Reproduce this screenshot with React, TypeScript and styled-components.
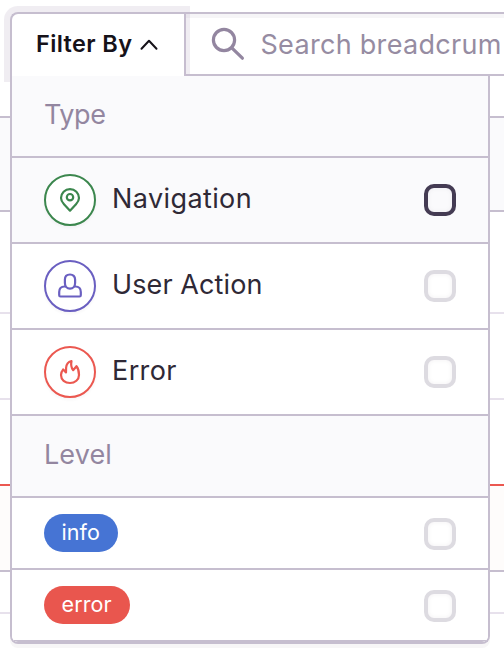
import React from "react";
import styled, { createGlobalStyle } from "styled-components";

const line = "#c6becf";

const GlobalStyle = createGlobalStyle`
  * { box-sizing: border-box; }
  body { margin: 0; background: #fff; overflow: hidden; font-family: Inter, "Liberation Sans", sans-serif; }
`;

const Page = styled.main`
  display: grid;
  width: 504px;
  height: 654px;
  overflow: hidden;
  background: #fff;
`;

const Table = styled.div`
  grid-area: 1 / 1;
  padding-top: 76px;
`;

const TableRow = styled.div<{ $h: number; $line: string; $bg?: string }>`
  height: ${(p) => p.$h}px;
  border-bottom: 2px solid ${(p) => p.$line};
  background: ${(p) => p.$bg ?? "#fff"};
`;

const Front = styled.div`
  grid-area: 1 / 1;
  z-index: 1;
  padding: 12px 0 0 10px;
  min-width: 0;
`;

const Toolbar = styled.div`
  display: flex;
  height: 64px;
`;

const FilterButton = styled.button`
  display: flex;
  flex: none;
  align-items: center;
  width: 174px;
  height: 64px;
  padding: 0 0 2px 24px;
  border: 2px solid ${line};
  border-width: 2px 0 0 2px;
  border-radius: 8px 0 0 0;
  background: #fff;
  background-clip: padding-box;
  box-shadow: 0 0 0 6px rgba(198, 190, 207, 0.27);
  color: #161219;
  font: 600 23.5px/28px Inter, sans-serif;
  letter-spacing: 0.38px;
  white-space: nowrap;
  z-index: 1;

  svg { flex: none; margin: 2px 0 0 8px; }
`;

const SearchBox = styled.div`
  display: flex;
  flex: none;
  align-items: center;
  width: 330px;
  height: 64px;
  padding-left: 25px;
  border: solid ${line};
  border-width: 2px 0 2px 2px;
  background: #fff;
  box-shadow: inset 0 4px 0 #f6f5f7;
  color: #9386a0;
  white-space: nowrap;
`;

const Placeholder = styled.span`
  margin-left: 15.5px;
  padding-top: 2px;
  color: #968ca2;
  font-size: 27px;
  line-height: 32px;
  letter-spacing: 0.3px;
`;

const Menu = styled.div`
  position: relative;
  z-index: 2;
  width: 480px;
  height: 568px;
  border: 2px solid ${line};
  border-top: 0;
  border-radius: 0 0 8px 8px;
  background: #fff;
  box-shadow: 0 4px 0 rgba(43, 34, 51, 0.04);
  overflow: hidden;
`;

const Heading = styled.div<{ $spacing: number }>`
  height: 82px;
  padding: 22px 0 0 32px;
  border-bottom: 2px solid ${line};
  background: #fafafc;
  color: #9386a0;
  font-size: 27px;
  line-height: 34px;
  letter-spacing: ${(p) => p.$spacing}px;
`;

const Option = styled.label<{ $compact?: boolean; $active?: boolean }>`
  display: flex;
  align-items: center;
  height: ${(p) => (p.$compact ? 72 : 86)}px;
  padding: 0 32px;
  border-bottom: 2px solid ${line};
  background: ${(p) => (p.$active ? "#fafafc" : "#fff")};
`;

const IconRing = styled.span<{ $color: string }>`
  display: grid;
  place-items: center;
  width: 52px;
  height: 52px;
  border: 2px solid ${(p) => p.$color};
  border-radius: 50%;
  background: #fff;
  color: ${(p) => p.$color};
  box-shadow: 0 2px 3px rgba(43, 34, 51, 0.04);
`;

const Name = styled.span<{ $spacing: number }>`
  margin-left: 16px;
  padding-bottom: 3px;
  color: #2f2936;
  font-size: 27px;
  line-height: 32px;
  letter-spacing: ${(p) => p.$spacing}px;
`;

const Tag = styled.span<{ $color: string; $w: number }>`
  width: ${(p) => p.$w}px;
  height: 38px;
  padding-left: 17.5px;
  border-radius: 19px;
  background: ${(p) => p.$color};
  color: #fff;
  font-size: 21.5px;
  line-height: 37px;
  letter-spacing: 0.1px;
`;

const Checkbox = styled.span<{ $active?: boolean; $compact?: boolean }>`
  width: 32px;
  height: 32px;
  margin-left: auto;
  margin-top: ${(p) => (p.$compact ? 2 : 0)}px;
  border: 4px solid ${(p) => (p.$active ? "#443b53" : "#dddbe1")};
  border-radius: 10px;
  background: transparent;
  box-shadow: inset 0 0 5px rgba(43, 34, 51, 0.06);
`;

const Icon = styled.svg.attrs({
  viewBox: "0 0 28 28",
  fill: "none",
  stroke: "currentColor",
  strokeWidth: 2.2,
  strokeLinecap: "round",
  strokeLinejoin: "round",
})`
  width: 28px;
  height: 28px;
`;

const SearchIcon = styled.svg`
  flex: none;
  width: 34px;
  height: 34px;
`;

const Pin = () => (
  <Icon>
    <path d="M14 24.7L8 18.2C5.7 15.8 5 13.9 5 12.1C5 7.1 9 3.1 14 3.1S23 7.1 23 12.1C23 13.9 22.3 15.8 20 18.2Z" />
    <circle cx="14" cy="11.2" r="3.2" />
  </Icon>
);

const Person = () => (
  <Icon>
    <path d="M9.2 14.5H8.7C5.2 14.5 3.2 16.7 3.2 20V23.2C3.2 24 3.7 24.5 4.5 24.5H23.5C24.3 24.5 24.8 24 24.8 23.2V20C24.8 16.7 22.8 14.5 19.3 14.5H18.8" />
    <path d="M14 2.5C10.9 2.5 8.9 4.4 8.9 7.6V11C8.9 14.4 11 16.7 14 16.7S19.1 14.4 19.1 11V7.6C19.1 4.4 17.1 2.5 14 2.5Z" />
  </Icon>
);

const Fire = () => (
  <Icon>
    <path d="M15.5 3C12.5 3.8 10.3 6.4 10.1 9.8L10 14.5L7.2 11.4C5.7 13.2 5 15 5 17.1C5 21.8 9 25 14 25S23 21.7 23 17C23 13.6 22.2 10.3 20.5 8.2L17.1 12.2C15.3 9.8 14.8 6.6 15.5 3Z" />
  </Icon>
);

const types = [
  { name: "Navigation", color: "#3c874e", icon: <Pin />, spacing: 0.4, active: true },
  { name: "User Action", color: "#6a5fc1", icon: <Person />, spacing: 0.1 },
  { name: "Error", color: "#eb5850", icon: <Fire />, spacing: 0.4 },
];

const levels = [
  { name: "info", color: "#4674d4", w: 74 },
  { name: "error", color: "#e9564e", w: 86 },
];

export default function App() {
  return (
    <>
      <GlobalStyle />
      <Page>
        <Table>
          <TableRow $h={42} $line={line} />
          <TableRow $h={94} $line={line} $bg="#fafafc" />
          <TableRow $h={102} $line="#e7e1ec" />
          <TableRow $h={86} $line="#e7e1ec" />
          <TableRow $h={86} $line="#eb5850" />
          <TableRow $h={86} $line={line} $bg="#fefcfb" />
          <TableRow $h={42} $line="#e7e1ec" />
        </Table>
        <Front>
          <Toolbar>
            <FilterButton>
              Filter By
              <svg width="18" height="12" viewBox="0 0 18 12" fill="none" stroke="currentColor" strokeWidth="2" strokeLinecap="round" strokeLinejoin="round">
                <path d="M1.5 9.7L9 1.7L16.5 9.7" />
              </svg>
            </FilterButton>
            <SearchBox>
              <SearchIcon viewBox="0 0 34 34" fill="none" stroke="currentColor" strokeWidth="3.2" strokeLinecap="round">
                <circle cx="13" cy="13" r="10.6" />
                <path d="M20.8 20.8L31.4 31.2" />
              </SearchIcon>
              <Placeholder>Search breadcrum</Placeholder>
            </SearchBox>
          </Toolbar>
          <Menu>
            <Heading $spacing={-0.4}>Type</Heading>
            {types.map((t) => (
              <Option key={t.name} $active={t.active}>
                <IconRing $color={t.color}>{t.icon}</IconRing>
                <Name $spacing={t.spacing}>{t.name}</Name>
                <Checkbox $active={t.active} />
              </Option>
            ))}
            <Heading $spacing={0.1}>Level</Heading>
            {levels.map((l) => (
              <Option key={l.name} $compact>
                <Tag $color={l.color} $w={l.w}>{l.name}</Tag>
                <Checkbox $compact />
              </Option>
            ))}
          </Menu>
        </Front>
      </Page>
    </>
  );
}
